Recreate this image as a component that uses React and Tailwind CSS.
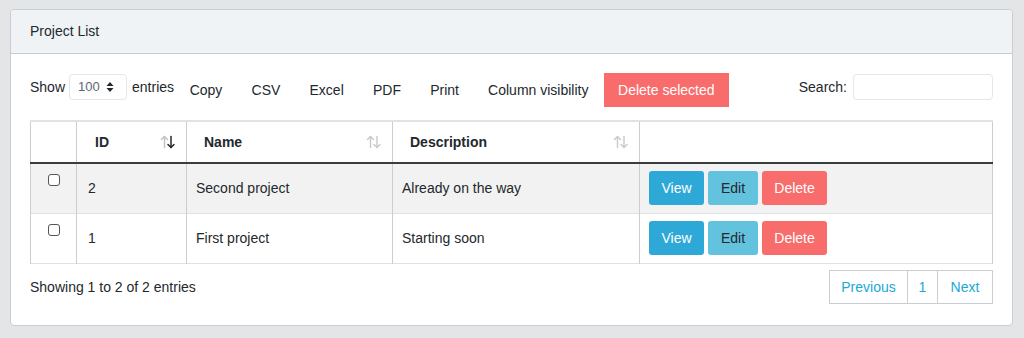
import React from "react";

function SortIcon({ active }) {
  return (
    <svg width="16" height="14" viewBox="0 0 16 14" className="shrink-0">
      <g fill="none" strokeWidth="1.5" strokeLinecap="round" strokeLinejoin="round">
        <g stroke={active ? "#c0c4c8" : "#c8ccd0"}>
          <path d="M4.5 12.5V1.5" />
          <path d="M1.5 4.5L4.5 1.5L7.5 4.5" />
        </g>
        <g stroke={active ? "#23282c" : "#c8ccd0"}>
          <path d="M11 1.5V12.5" />
          <path d="M8 9.5L11 12.5L14 9.5" />
        </g>
      </g>
    </svg>
  );
}

function Checkbox() {
  return <div className="w-[12px] h-[12px] rounded-[3px] border-[1.5px] border-[#555] bg-white" />;
}

const rows = [
  { id: "2", name: "Second project", desc: "Already on the way", bg: "bg-[#f2f2f2]" },
  { id: "1", name: "First project", desc: "Starting soon", bg: "bg-white" },
];

export default function App() {
  return (
    <div
      className="w-[1024px] h-[338px] bg-[#e4e5e6] pt-[9px] px-[10px] text-[14px] text-[#23282c]"
      style={{ fontFamily: '"Liberation Sans", Arial, sans-serif' }}
    >
      <div className="w-[1003px] bg-white border border-[#c8ced3] rounded-[4px]">
        <div className="h-[44px] bg-[#f0f3f5] border-b border-[#c8ced3] rounded-t-[4px] flex items-center pl-[19px]">
          Project List
        </div>
        <div className="px-[19px] pt-[19px] pb-[21px]">
          <div className="flex items-start h-[34px]">
            <div className="flex items-center h-[26px] mt-[1px]">
              <span>Show</span>
              <div className="ml-[4px] w-[58px] h-[26px] border border-[#e4e7ea] rounded-[4px] flex items-center pl-[8px] text-[13px] text-[#5c6873]">
                <span>100</span>
                <svg width="8" height="12" viewBox="0 0 8 12" className="ml-[6px]">
                  <path d="M4 1L7.5 5H0.5Z" fill="#23282c" />
                  <path d="M4 11L7.5 7H0.5Z" fill="#23282c" />
                </svg>
              </div>
              <span className="ml-[5px]">entries</span>
            </div>
            <div className="flex items-center h-[34px] ml-[1px]">
              {["Copy", "CSV", "Excel", "PDF", "Print", "Column visibility"].map((t) => (
                <div key={t} className="px-[14.6px] h-[34px] flex items-center pt-[1px]">
                  {t}
                </div>
              ))}
              <div className="ml-[1px] h-[34px] px-[14px] flex items-center bg-[#f86c6b] text-white">
                Delete selected
              </div>
            </div>
            <div className="ml-auto flex items-center h-[26px] mt-[1px]">
              <span>Search:</span>
              <div className="ml-[6px] w-[140px] h-[26px] border border-[#e4e7ea] rounded-[4px]" />
            </div>
          </div>

          <table className="mt-[13px] w-[963px] border-collapse table-fixed">
            <colgroup>
              <col className="w-[46px]" />
              <col className="w-[110px]" />
              <col className="w-[206px]" />
              <col className="w-[247px]" />
              <col />
            </colgroup>
            <thead>
              <tr className="h-[42px] border-t-[2px] border-[#dfe3e6]">
                <th className="border-l border-r border-[#c8ced3] border-b-[2px] border-b-[#3a3d40]" />
                {[
                  ["ID", true, "pl-[18px]"],
                  ["Name", false, "pl-[17px]"],
                  ["Description", false, "pl-[17px]"],
                ].map(([t, a, pl]) => (
                  <th
                    key={t}
                    className={`border-r border-[#c8ced3] border-b-[2px] border-b-[#3a3d40] text-left font-bold ${pl} pr-[10px]`}
                  >
                    <div className="flex items-center justify-between">
                      <span>{t}</span>
                      <SortIcon active={a} />
                    </div>
                  </th>
                ))}
                <th className="border-r border-[#c8ced3] border-b-[2px] border-b-[#3a3d40]" />
              </tr>
            </thead>
            <tbody>
              {rows.map((r) => (
                <tr key={r.id} className={`h-[50px] ${r.bg} border-b border-[#dfe3e6]`}>
                  <td className="border-l border-r border-[#c8ced3] align-top pt-[10px] pl-[17px]">
                    <Checkbox />
                  </td>
                  <td className="border-r border-[#c8ced3] pl-[11px]">{r.id}</td>
                  <td className="border-r border-[#c8ced3] pl-[9px]">{r.name}</td>
                  <td className="border-r border-[#c8ced3] pl-[9px]">{r.desc}</td>
                  <td className="border-r border-[#c8ced3] pl-[9px]">
                    <div className="flex gap-[4px]">
                      <div className="w-[55px] h-[34px] rounded-[3px] bg-[#2ea8d7] text-white flex items-center justify-center">
                        View
                      </div>
                      <div className="w-[50px] h-[34px] rounded-[3px] bg-[#63c2de] text-[#23282c] flex items-center justify-center">
                        Edit
                      </div>
                      <div className="w-[65px] h-[34px] rounded-[3px] bg-[#f86c6b] text-white flex items-center justify-center">
                        Delete
                      </div>
                    </div>
                  </td>
                </tr>
              ))}
            </tbody>
          </table>

          <div className="flex items-start mt-[6px]">
            <div className="mt-[7px]">Showing 1 to 2 of 2 entries</div>
            <div className="ml-auto flex h-[34px] text-[#20a8d8]">
              <div className="w-[79px] border border-[#c8ced3] flex items-center justify-center pt-[1px]">Previous</div>
              <div className="w-[30px] border-y border-r border-[#c8ced3] flex items-center justify-center pt-[1px]">1</div>
              <div className="w-[55px] border-y border-r border-[#c8ced3] flex items-center justify-center pt-[1px]">Next</div>
            </div>
          </div>
        </div>
      </div>
    </div>
  );
}
